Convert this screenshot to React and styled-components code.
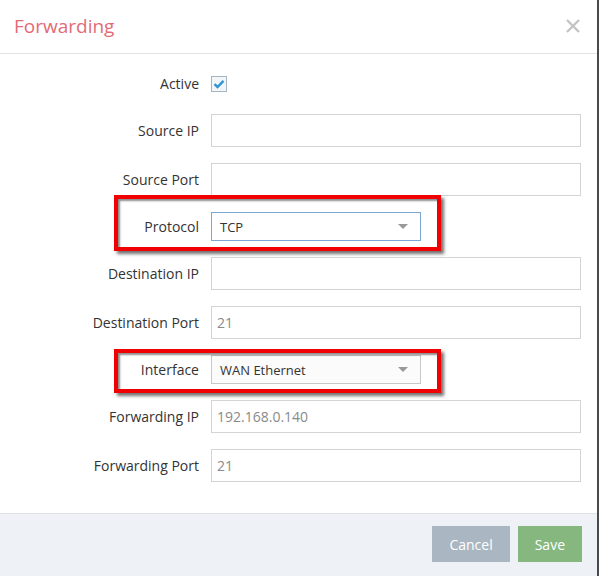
import styled, { createGlobalStyle } from "styled-components";

const GlobalStyle = createGlobalStyle`
  html, body { margin: 0; padding: 0; }
  body {
    background: #4a4a4a;
    font-family: "Open Sans", "Liberation Sans", sans-serif;
  }
`

const Modal = styled.div`
  width: 597px;
  height: 576px;
  background: #fff;
  display: flex;
  flex-direction: column;
`

const Header = styled.div`
  height: 53px;
  flex-shrink: 0;
  border-bottom: 1px solid #e3e3e3;
  display: flex;
  align-items: center;
  justify-content: space-between;
  padding: 0 16px 0 14px;
`

const Title = styled.h4`
  margin: 0 0 1px;
  font-size: 19px;
  font-weight: 400;
  color: #e36b76;
`

const Close = styled.svg`
  width: 16px;
  height: 16px;
  margin-bottom: 1px;
`

const Body = styled.div`
  flex: 1;
  padding: 22px 16px 0 0;
  display: flex;
  flex-direction: column;
  gap: 16px;
`

const Row = styled.div`
  position: relative;
  display: grid;
  grid-template-columns: 199px 1fr;
  column-gap: 12px;
  align-items: center;
  margin-bottom: ${(p) => p.$extra || 0}px;
`

const Label = styled.label`
  text-align: right;
  font-size: 14px;
  line-height: 16px;
  color: #333;
`

const Input = styled.div`
  height: 33px;
  box-sizing: border-box;
  border: 1px solid #d4d4d4;
  padding: 0 5px;
  display: flex;
  align-items: center;
  font-size: 14px;
  color: #8a8a8a;
`

const Select = styled.div`
  width: 210px;
  height: 29px;
  box-sizing: border-box;
  border: 1px solid ${(p) => (p.$focus ? "#7aa7d4" : "#c8c8c8")};
  background: ${(p) => (p.$focus ? "#fff" : "#fbfbfb")};
  padding: 0 12px 0 8px;
  display: flex;
  align-items: center;
  justify-content: space-between;
  font-size: 13px;
  color: #333;
`

const Caret = styled.span`
  width: 0;
  height: 0;
  border-left: 5px solid transparent;
  border-right: 5px solid transparent;
  border-top: 5px solid #999;
`

const Check = styled.span`
  width: 16px;
  height: 16px;
  box-sizing: border-box;
  border: 1px solid #a7b4c2;
  background: #f3f6f9;
  display: flex;
  align-items: center;
  justify-content: center;
`

const Highlight = styled.div`
  position: absolute;
  left: 114px;
  width: 327px;
  top: ${(p) => p.$top}px;
  height: ${(p) => p.$height}px;
  box-sizing: border-box;
  border: 4px solid #f00000;
  box-shadow: 3px 3px 3px rgba(0, 0, 0, 0.55), inset 2px 2px 2px rgba(0, 0, 0, 0.45);
  pointer-events: none;
`

const Footer = styled.div`
  height: 63px;
  box-sizing: border-box;
  flex-shrink: 0;
  border-top: 1px solid #dfe3e8;
  background: #eef1f6;
  display: flex;
  align-items: center;
  justify-content: flex-end;
  gap: 8px;
  padding: 0 15px 2px 0;
`

const Button = styled.button`
  height: 36px;
  padding: 0 17px;
  border: none;
  background: ${(p) => p.$bg};
  color: #fff;
  font-family: inherit;
  font-size: 14px;
`

const fields = [
  { label: "Source IP", value: "" },
  { label: "Source Port", value: "" },
  { label: "Protocol", select: "TCP", focus: true, box: [-17, 56] },
  { label: "Destination IP", value: "" },
  { label: "Destination Port", value: "21" },
  { label: "Interface", select: "WAN Ethernet", box: [-6, 44] },
  { label: "Forwarding IP", value: "192.168.0.140" },
  { label: "Forwarding Port", value: "21" },
]

const App = () => {
  return (
    <>
      <GlobalStyle />
      <Modal>
        <Header>
          <Title>Forwarding</Title>
          <Close viewBox="0 0 16 16">
            <path d="M2 2 L14 14 M14 2 L2 14" stroke="#c4c4c4" strokeWidth="2.4" />
          </Close>
        </Header>
        <Body>
          <Row $extra={6}>
            <Label>Active</Label>
            <Check>
              <svg width="12" height="10" viewBox="0 0 12 10">
                <path d="M1.5 5.2 L4.5 8 L10.5 1.8" fill="none" stroke="#2f95d6" strokeWidth="2.4" />
              </svg>
            </Check>
          </Row>
          {fields.map((f) => (
            <Row key={f.label}>
              <Label>{f.label}</Label>
              {f.select ? (
                <Select $focus={f.focus}>
                  {f.select}
                  <Caret />
                </Select>
              ) : (
                <Input>{f.value}</Input>
              )}
              {f.box && <Highlight $top={f.box[0]} $height={f.box[1]} />}
            </Row>
          ))}
        </Body>
        <Footer>
          <Button $bg="#aab7c2">Cancel</Button>
          <Button $bg="#85b77f">Save</Button>
        </Footer>
      </Modal>
    </>
  )
}

export default App
